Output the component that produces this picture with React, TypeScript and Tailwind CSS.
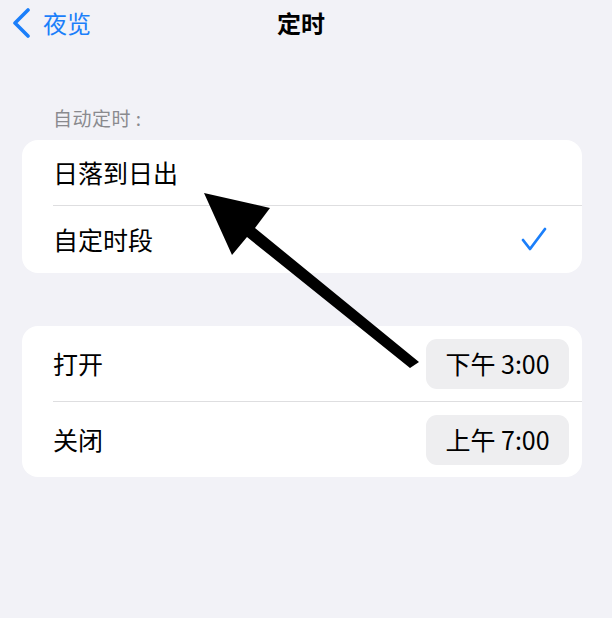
import React from "react";

const font = { fontFamily: '"Noto Sans CJK SC", "Noto Sans", sans-serif' };

export default function App() {
  return (
    <div className="relative w-[612px] h-[618px] bg-[#f2f2f7] overflow-hidden" style={font}>
      {/* Nav bar */}
      <div className="relative h-[46px] flex items-center">
        <div className="flex items-center pl-[11px] gap-[12px] text-[#1b7ffa]">
          <svg width="20" height="30" viewBox="0 0 20 30">
            <polyline points="17,2 4,15 17,28" fill="none" stroke="#1b7ffa" strokeWidth="3.6" strokeLinecap="round" strokeLinejoin="round" />
          </svg>
          <span className="text-[24px] leading-none">夜览</span>
        </div>
        <div className="absolute left-[277px] top-0 h-[46px] flex items-center text-[24px] font-bold text-black leading-none">定时</div>
      </div>

      <div className="pl-[22px] pr-[30px]">
        <div className="mt-[61px] pl-[31px] text-[19px] leading-[22px] tracking-[0.5px] text-[#8a8a8e]">自动定时 :</div>
        <div className="mt-[11px] bg-white rounded-[16px] overflow-hidden">
          <div className="pl-[31px]">
            <div className="h-[66px] flex items-center border-b border-[#dedee0] text-[25px] text-black">日落到日出</div>
          </div>
          <div className="pl-[31px] pr-[34px] h-[67px] flex items-center justify-between text-[25px] text-black">
            <span>自定时段</span>
            <svg width="28" height="26" viewBox="0 0 28 26">
              <polyline points="3,13 10,22 25,2" fill="none" stroke="#1b7ffa" strokeWidth="2.8" strokeLinecap="round" strokeLinejoin="round" />
            </svg>
          </div>
        </div>

        <div className="mt-[53px] bg-white rounded-[16px] overflow-hidden">
          <div className="pl-[31px]">
            <div className="h-[76px] flex items-center justify-between border-b border-[#dedee0] pr-[13px]">
              <span className="text-[25px] text-black">打开</span>
              <div className="w-[143px] h-[50px] rounded-[11px] bg-[#eeeef0] flex items-center justify-center text-[25px] text-black">下午 3:00</div>
            </div>
          </div>
          <div className="pl-[31px] pr-[13px] h-[75px] flex items-center justify-between">
            <span className="text-[25px] text-black">关闭</span>
            <div className="w-[143px] h-[50px] rounded-[11px] bg-[#eeeef0] flex items-center justify-center text-[25px] text-black">上午 7:00</div>
          </div>
        </div>
      </div>

      {/* Arrow annotation */}
      <svg className="absolute left-0 top-0 pointer-events-none" width="612" height="618" viewBox="0 0 612 618">
        <polygon points="204,193 270,208 255,228 419,362 410,368 247,237 232,255" fill="#000" />
      </svg>
    </div>
  );
}
